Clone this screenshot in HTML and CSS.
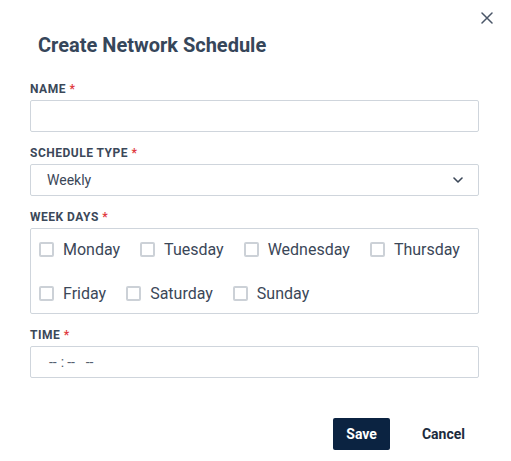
FILE: index.html
```html
<!DOCTYPE html>
<html lang="en">
<head>
<meta charset="utf-8">
<title>Create Network Schedule</title>
<link rel="stylesheet" href="styles.css">
</head>
<body>
<div class="modal">
  <div class="topbar">
    <button class="close" type="button" aria-label="Close">
      <svg width="12" height="12" viewBox="0 0 12 12"><path d="M1 1 L11 11 M11 1 L1 11" stroke="#4a5668" stroke-width="1.5" stroke-linecap="round" fill="none"/></svg>
    </button>
  </div>
  <h2 class="title">Create Network Schedule</h2>
  <form class="form">
    <div class="field">
      <label class="label">NAME <span class="req">*</span></label>
      <input class="input" type="text">
    </div>
    <div class="field">
      <label class="label">SCHEDULE TYPE <span class="req">*</span></label>
      <div class="select">
        <span>Weekly</span>
        <svg width="10" height="6" viewBox="0 0 10 6"><path d="M1 1 L5 5 L9 1" stroke="#3b4758" stroke-width="1.6" fill="none" stroke-linecap="round" stroke-linejoin="round"/></svg>
      </div>
    </div>
    <div class="field">
      <label class="label">WEEK DAYS <span class="req">*</span></label>
      <div class="days">
        <label class="day"><span class="box"></span>Monday</label>
        <label class="day"><span class="box"></span>Tuesday</label>
        <label class="day"><span class="box"></span>Wednesday</label>
        <label class="day"><span class="box"></span>Thursday</label>
        <label class="day"><span class="box"></span>Friday</label>
        <label class="day"><span class="box"></span>Saturday</label>
        <label class="day"><span class="box"></span>Sunday</label>
      </div>
    </div>
    <div class="field">
      <label class="label">TIME <span class="req">*</span></label>
      <input class="input time" type="time">
    </div>
  </form>
  <div class="actions">
    <button class="btn save" type="button">Save</button>
    <button class="btn cancel" type="button">Cancel</button>
  </div>
</div>
</body>
</html>
```

FILE: styles.css
```css
html, body {
  margin: 0;
  padding: 0;
  background: #ffffff;
}
body {
  font-family: Roboto, "Liberation Sans", Arial, sans-serif;
  color: #3b4758;
}
.modal {
  padding: 8px 32px 0 30px;
}
.topbar {
  display: flex;
  justify-content: flex-end;
  margin-right: -18px;
}
.close {
  width: 20px;
  height: 20px;
  padding: 0;
  border: 0;
  background: transparent;
  display: flex;
  align-items: center;
  justify-content: center;
}
.title {
  margin: 5px 0 24px 0;
  padding-left: 8px;
  font-size: 20px;
  line-height: 24px;
  font-weight: 700;
  color: #36465a;
}
.form {
  display: flex;
  flex-direction: column;
  gap: 13px;
}
.field {
  display: flex;
  flex-direction: column;
}
.label {
  font-size: 12px;
  line-height: 16px;
  font-weight: 700;
  letter-spacing: 0.5px;
  color: #3b4859;
  margin-bottom: 3px;
}
.req {
  color: #e0393e;
}
.input {
  box-sizing: border-box;
  height: 32px;
  width: 100%;
  border: 1px solid #cfd5dc;
  border-radius: 2px;
  margin: 0;
  padding: 0 16px;
  font-family: Roboto, "Liberation Sans", Arial, sans-serif;
  font-size: 14px;
  color: #3b4758;
  background: #fff;
  outline: none;
}
.time {
  padding-left: 17px;
}
.time::-webkit-calendar-picker-indicator {
  display: none;
}
.time::-webkit-datetime-edit {
  color: #55606f;
}
.time::-webkit-datetime-edit-text {
  padding: 0 2px 0 3px;
}
.time::-webkit-datetime-edit-ampm-field {
  margin-left: 2px;
}
.select {
  box-sizing: border-box;
  height: 32px;
  border: 1px solid #cfd5dc;
  border-radius: 2px;
  padding: 0 15px 0 16px;
  display: flex;
  align-items: center;
  justify-content: space-between;
  font-size: 14px;
  color: #3b4758;
}
.days {
  border: 1px solid #cfd5dc;
  border-radius: 2px;
  padding: 8px;
  display: flex;
  flex-wrap: wrap;
  column-gap: 20px;
  row-gap: 20px;
}
.day {
  display: flex;
  align-items: center;
  gap: 9px;
  height: 24px;
  font-size: 16px;
  color: #3b4758;
}
.box {
  box-sizing: border-box;
  width: 15px;
  height: 15px;
  border: 2px solid #ccd1d7;
  border-radius: 2px;
}
.actions {
  margin-top: 40px;
  display: flex;
  justify-content: flex-end;
  gap: 19px;
  margin-right: 1px;
}
.btn {
  height: 32px;
  padding: 0 13px;
  border: 0;
  border-radius: 2px;
  font-family: Roboto, "Liberation Sans", Arial, sans-serif;
  font-size: 14px;
  font-weight: 700;
}
.save {
  background: #0b2341;
  color: #ffffff;
}
.cancel {
  background: transparent;
  color: #1c2b3d;
}
```
